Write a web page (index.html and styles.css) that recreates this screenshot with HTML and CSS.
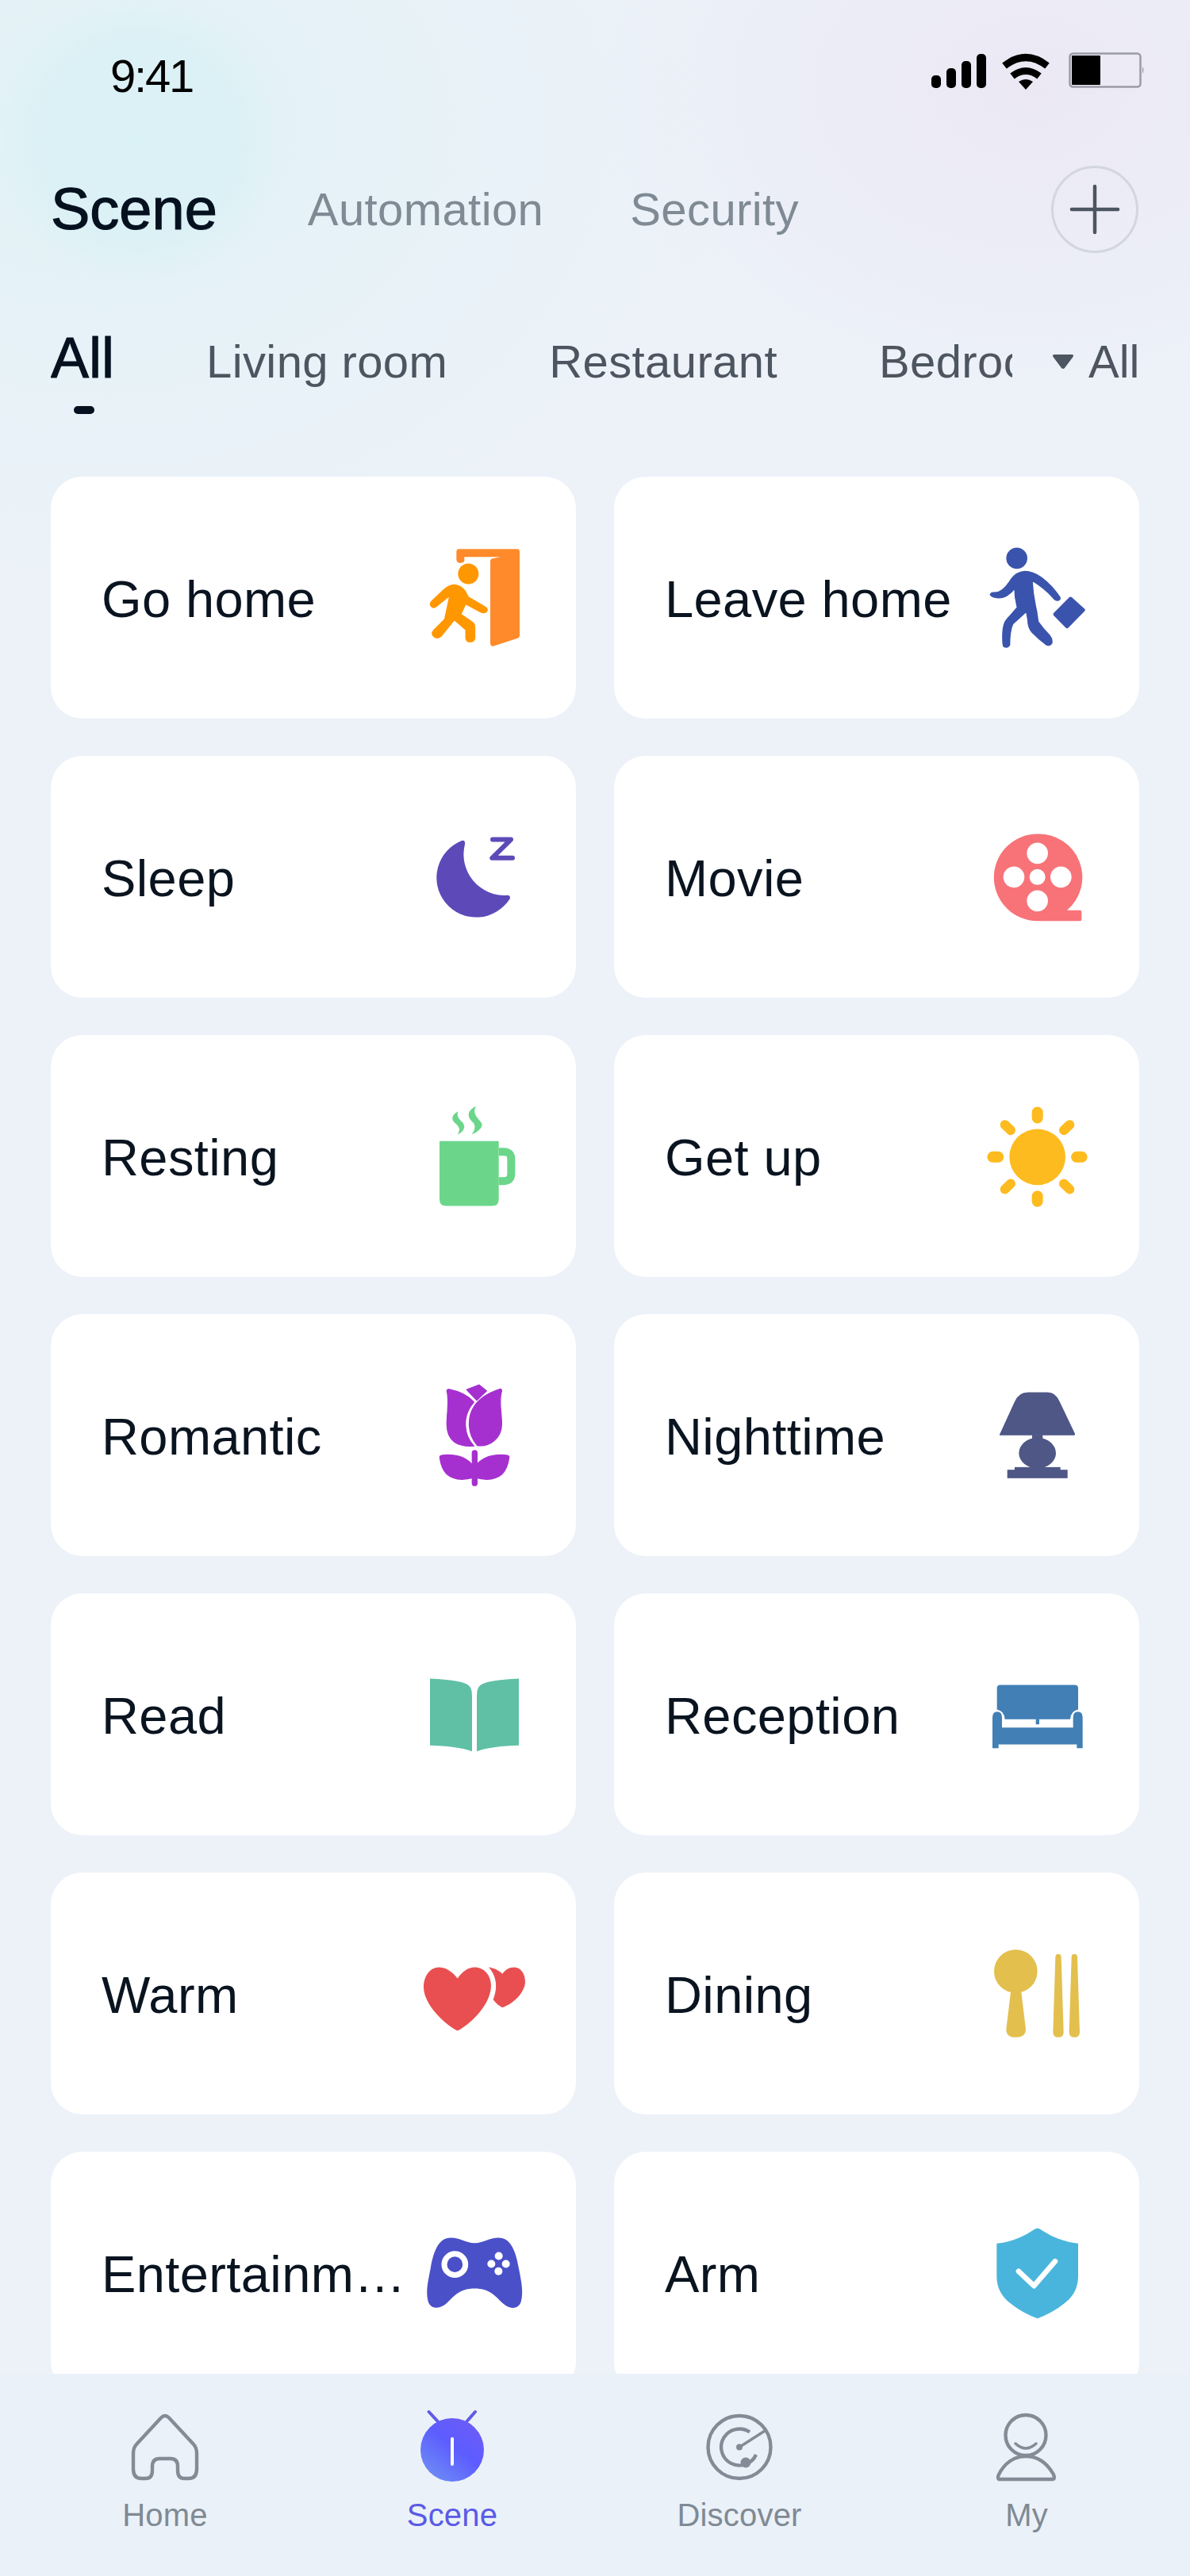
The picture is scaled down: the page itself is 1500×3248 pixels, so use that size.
FILE: index.html
```html
<!DOCTYPE html>
<html lang="en">
<head>
<meta charset="utf-8">
<title>Scene</title>
<link rel="stylesheet" href="styles.css">
</head>
<body>
<div class="app">
  <header class="status">
    <span class="time">9:41</span>
    <div class="status-icons">
      <svg class="ic-signal" width="70" height="44" viewBox="0 0 70 44"><rect x="1" y="27" width="12" height="16" rx="5"/><rect x="20" y="18" width="12" height="25" rx="5"/><rect x="39" y="9" width="12" height="34" rx="5"/><rect x="58" y="0" width="12" height="43" rx="5"/></svg>
      <svg class="ic-wifi" width="62" height="46" viewBox="0 0 62 46"><path class="wifi-arc" d="M4 16Q31-5 58 16"/><path class="wifi-arc" d="M14 29Q31 16 48 29"/><path d="M22 36Q31 30 40 36L31 46Z"/></svg>
      <svg width="96" height="46" viewBox="0 0 96 46"><rect class="batt-shell" x="1.500" y="1.500" width="89" height="42" rx="4"/><rect x="4" y="4" width="36" height="37" rx="1"/><path class="batt-nub" d="M93 18q3 4 0 9z"/></svg>
    </div>
  </header>

  <nav class="main-tabs">
    <span class="main-tab is-active">Scene</span>
    <span class="main-tab">Automation</span>
    <span class="main-tab">Security</span>
    <button class="add" type="button" aria-label="Add">
      <svg width="66" height="66" viewBox="0 0 66 66"><path d="M33 3V63M3 33H63"/></svg>
    </button>
  </nav>

  <div class="rooms">
    <div class="room-list">
      <span class="room is-active">All<i class="room-mark"></i></span>
      <span class="room">Living room</span>
      <span class="room">Restaurant</span>
      <span class="room">Bedroom</span>
    </div>
    <div class="room-filter">
      <svg width="28" height="20" viewBox="0 0 28 20"><path d="M3 1H25Q28 1 26.500 4L16 18Q14 20 12 18L1.500 4Q0 1 3 1Z"/></svg>
      <span>All</span>
    </div>
  </div>

  <main class="grid">
    <article class="card"><span class="card-label">Go home</span>
      <svg class="card-icon" viewBox="78 70.500 480 480"><path fill="#ff8a2b" d="M226 135q0-10 10-10H455q10 0 10 10V450q0 10-8 13L368 492q-14 4-14-12V170q0-5 5-8L392 155H256V168q0 10-14 10q-16 0-16-14Z"/><circle fill="#ff9800" cx="271" cy="219" r="39"/><path fill="#ff9800" stroke="#ff9800" stroke-width="7" stroke-linejoin="round" d="M218 262Q243 264 259 287L270 308L333 345Q346 353 338 362Q330 368 318 362L260 331L241 373L287 404Q294 410 294 420V462Q292 475 278 475Q265 475 263 462V430L218 391L166 455Q152 465 141 454Q131 445 141 434L183 392L203 298L148 342Q138 349 131 340Q125 331 135 322L182 278Q197 264 218 262Z"/></svg></article>
    <article class="card"><span class="card-label">Leave home</span>
      <svg class="card-icon" viewBox="48 70.500 480 480"><g fill="#3a54ad"><circle cx="185" cy="160" r="40"/><path stroke="#3a54ad" stroke-width="6" stroke-linejoin="round" d="M215 211Q245 211 278 234Q318 264 347 308Q350 319 338 319Q330 319 322 308Q290 272 242 243Q245 300 259 360L265 401Q283 427 308 452Q319 465 317 480Q310 492 298 487Q270 467 242 438Q228 420 228 395L222 360L169 408Q157 435 157 488Q150 499 137 494Q131 490 133 440Q135 407 148 392L188 346Q178 310 178 272Q150 309 115 309Q92 307 86 298Q88 290 100 291Q132 293 163 242Q183 213 215 211Z"/><path stroke="#3a54ad" stroke-width="14" stroke-linejoin="round" d="M388 313L436 356L375 418L330 372Z"/></g></svg></article>

    <article class="card"><span class="card-label">Sleep</span>
      <svg class="card-icon" viewBox="78 -43.500 480 480"><path fill="#5d4ab8" d="M248 58A150 150 0 1 0 428 278q4-12-10-13A155 155 0 0 1 258 72q2-16-10-14Z"/><path fill="none" stroke="#5d4ab8" stroke-width="18" stroke-linecap="round" stroke-linejoin="round" d="M363 54H432L361 124H438"/></svg></article>
    <article class="card"><span class="card-label">Movie</span>
      <svg class="card-icon" viewBox="48 -43.500 480 480"><path fill="#f77378" d="M263 33a164 164 0 0 1 112 289h49q6 0 6 6v28q0 6-6 6H263a164 164 0 0 1 0-329Z"/><g fill="#fff"><circle cx="263" cy="106" r="40"/><circle cx="174" cy="196" r="40"/><circle cx="352" cy="196" r="40"/><circle cx="263" cy="286" r="40"/><circle cx="263" cy="196" r="30"/></g></svg></article>

    <article class="card"><span class="card-label">Resting</span>
      <svg class="card-icon" viewBox="78 1012.500 480 480"><g fill="#6bd68a"><path d="M162 1195H386V1415q0 25-25 25H187q-25 0-25-25Z"/><path d="M300 1063C265 1080 265 1105 290 1125C300 1140 295 1155 283 1170C310 1160 330 1140 320 1125C305 1105 285 1090 300 1063Z"/><path d="M233 1082C205 1095 205 1115 225 1130C240 1145 240 1155 230 1170C255 1160 262 1140 250 1125C235 1110 225 1100 233 1082Z"/></g><path fill="none" stroke="#6bd68a" stroke-width="30" d="M386 1235H405q28 0 28 28v55q0 28-28 28H386"/></svg></article>
    <article class="card"><span class="card-label">Get up</span>
      <svg class="card-icon" viewBox="48 1012.500 480 480"><circle fill="#fdbb1f" cx="263" cy="1255" r="106"/><path fill="none" stroke="#fdbb1f" stroke-width="42" stroke-linecap="round" d="M263 1086V1107M263 1403V1423M94 1255H115M411 1255H431"/><path fill="none" stroke="#fdbb1f" stroke-width="36" stroke-linecap="round" d="M140 1133L162 1154M385 1133L363 1154M140 1377L162 1356M385 1377L363 1356"/></svg></article>

    <article class="card"><span class="card-label">Romantic</span>
      <svg class="card-icon" viewBox="78 28.500 480 480"><g fill="#a630cf" stroke="#a630cf" stroke-width="4" stroke-linejoin="round"><path d="M265 95L312 77L340 100L303 135Z"/><path d="M190 100q0-8 10-6q60 12 92 48q-35 40-32 90q2 45 32 76C230 312 190 290 190 225C190 180 200 140 190 100Z"/><path d="M397 100q0-10-10-6q-75 25-100 75q-15 30-12 65q2 40 30 72C350 312 397 280 397 225C397 180 385 140 397 100Z"/><path d="M163 350q0-8 30-8Q260 342 290 385V428Q225 445 190 415Q168 392 163 350Z"/><path d="M425 350q0-8-30-8Q328 342 298 385V428Q363 445 398 415Q420 392 425 350Z"/><rect x="286" y="325" width="18" height="133" rx="9"/></g></svg></article>
    <article class="card"><span class="card-label">Nighttime</span>
      <svg class="card-icon" viewBox="48 28.500 480 480"><g fill="#4e5785"><path d="M120 265L177 140q15-35 50-35h75q30 0 45 35L405 262q2 5-4 6H124q-6 0-4-3Z"/><rect x="243" y="266" width="40" height="26"/><ellipse cx="263" cy="335" rx="70" ry="58"/><rect x="177" y="388" width="173" height="14"/><rect x="149" y="398" width="228" height="32"/></g></svg></article>

    <article class="card"><span class="card-label">Read</span>
      <svg class="card-icon" viewBox="78 1084.500 480 480"><g fill="#5fc0a6"><path d="M126 1188q120 5 145 25q14 10 14 40V1463q-60-20-159-22Z"/><path d="M462 1188q-120 5-145 25q-14 10-14 40V1463q60-20 159-22Z"/></g></svg></article>
    <article class="card"><span class="card-label">Reception</span>
      <svg class="card-icon" viewBox="48 1084.500 480 480"><g fill="#417fb5"><path d="M110 1225q0-13 13-13H404q13 0 13 13V1305q-28 5-30 37H140q-2-32-30-37Z"/><rect x="257" y="1340" width="13" height="21"/><path d="M93 1335q0-22 18-22q18 0 18 22V1373H398V1335q0-22 18-22q18 0 18 22V1451H412V1437H116V1451H93Z"/></g></svg></article>

    <article class="card"><span class="card-label">Warm</span>
      <svg class="card-icon" viewBox="78 10.500 480 480"><g fill="#e94f50"><path d="M230 192C205 160 180 150 160 150C125 150 102 185 102 225C102 290 180 365 230 390C280 365 357 290 357 220C357 180 330 150 295 150C270 150 250 165 230 192Z"/><path d="M348 150C365 152 385 160 400 175C410 160 425 150 445 150C470 150 486 175 486 205C486 245 440 290 400 302C385 295 375 285 365 272C378 240 385 190 348 150Z"/></g></svg></article>
    <article class="card"><span class="card-label">Dining</span>
      <svg class="card-icon" viewBox="48 10.500 480 480"><g fill="#e3bf4e"><circle cx="181" cy="165" r="82"/><path d="M163 235L145 385q0 30 36 30q38 0 38-30L201 235Z"/><path d="M331 112q0-12 11-12q11 0 11 12L362 395q0 20-20 20q-20 0-20-20Z"/><path d="M392 112q0-12 11-12q11 0 11 12L423 395q0 20-20 20q-20 0-20-20Z"/></g></svg></article>

    <article class="card"><span class="card-label">Entertainment</span>
      <svg class="card-icon" viewBox="78 1066.500 480 480"><path fill="#4a50c8" d="M205 1173C240 1173 260 1193 295 1193C330 1193 350 1173 385 1173C430 1173 450 1220 462 1290C472 1340 480 1380 470 1415C460 1445 425 1445 400 1420C370 1390 350 1365 295 1365C240 1365 220 1390 190 1420C165 1445 125 1445 118 1410C110 1375 118 1340 128 1290C140 1220 160 1173 205 1173Z"/><circle fill="none" stroke="#fff" stroke-width="21" cx="220" cy="1274" r="40"/><g fill="#fff"><circle cx="386" cy="1242" r="15"/><circle cx="358" cy="1272" r="15"/><circle cx="413" cy="1272" r="15"/><circle cx="385" cy="1300" r="15"/></g></svg></article>
    <article class="card"><span class="card-label">Arm</span>
      <svg class="card-icon" viewBox="48 1066.500 480 480"><path fill="#4ab5dc" d="M263 1137q5 0 20 10q60 40 134 48V1320q0 60-50 100q-50 40-104 58q-54-18-104-58q-50-40-50-100V1195q74-8 134-48q15-10 20-10Z"/><path fill="none" stroke="#fff" stroke-width="20" stroke-linecap="round" stroke-linejoin="round" d="M192 1300L250 1355L330 1262"/></svg></article>
  </main>

  <footer class="tabbar">
    <div class="tab">
      <svg class="tab-icon" viewBox="0 0 100 92"><path d="M45 10.500q5-5 10 0L86 44q4 4 4 12V75q0 12-10 12H74q-8 0-8-10V72q0-10-9-10H43q-9 0-9 10V77q0 10-8 10H20q-10 0-10-12V56q0-8 4-12Z"/></svg>
      <span class="tab-label">Home</span>
    </div>
    <div class="tab is-active">
      <svg class="tab-icon" viewBox="0 0 100 92"><defs><linearGradient id="sceneGrad" x1="0.100" y1="1" x2="0.900" y2="0"><stop offset="0" stop-color="#6f92f4"/><stop offset="0.550" stop-color="#5d5cff"/><stop offset="1" stop-color="#6e5cf6"/></linearGradient></defs><path class="antenna" d="M20.600 3L31.700 15M79 3L68.500 15"/><circle fill="url(#sceneGrad)" stroke="none" cx="50" cy="51" r="40"/><path class="scene-bar" d="M50 37V69"/></svg>
      <span class="tab-label">Scene</span>
    </div>
    <div class="tab">
      <svg class="tab-icon" viewBox="0 0 100 92"><circle cx="50" cy="47.500" r="39.500"/><path d="M63 28.500A23 23 0 1 0 71 57"/><path class="thin" d="M50 47.500L82 27"/><circle class="dot" cx="50" cy="47.500" r="4"/><circle class="dot" cx="58" cy="67" r="6.500"/></svg>
      <span class="tab-label">Discover</span>
    </div>
    <div class="tab">
      <svg class="tab-icon" viewBox="0 0 100 92"><circle cx="49" cy="32.500" r="25.500"/><path d="M15 88q-2-2 0-6C22 68 34 59 49 59C64 59 76 68 84 82q2 6-1 6Z"/><path class="thin" d="M36 43q13 12 26 0"/></svg>
      <span class="tab-label">My</span>
    </div>
  </footer>
</div>
</body>
</html>
```
FILE: styles.css
```css
* { box-sizing: border-box; }
html, body { margin: 0; padding: 0; }
body { font-family: "Liberation Sans", Arial, sans-serif; color: #0a1420; }

.app {
  width: 1500px;
  height: 3248px;
  display: flex;
  flex-direction: column;
  overflow: hidden;
  background:
    radial-gradient(circle 180px at 175px 175px, #daf1f5 0%, #dcf1f5 72%, rgba(220,241,245,0) 100%),
    radial-gradient(ellipse 820px 620px at 120px 160px, #e1f2f6 0%, rgba(225,242,246,0) 100%),
    radial-gradient(ellipse 560px 420px at 1300px 110px, #ebe8f4 0%, rgba(235,232,244,0) 100%),
    #edf2f9;
}

/* status bar */
.status {
  height: 208px;
  flex: none;
  display: flex;
  justify-content: space-between;
  align-items: flex-start;
  padding: 64px 57px 0 139px;
}
.time {
  font-size: 58px;
  line-height: 64px;
  letter-spacing: -2.200px;
  color: #000;
}
.status-icons { display: flex; gap: 19px; align-items: flex-start; margin-top: 2px; }
.status-icons svg { display: block; }
.ic-signal { margin-top: 2px; }
.ic-wifi { margin-top: 1px; margin-right: 4px; }
.wifi-arc { fill: none; stroke: #000; stroke-width: 9; stroke-linecap: butt; }
.batt-shell { fill: none; stroke: #9a9ca6; stroke-width: 2.500; }
.batt-nub { fill: #9a9ca6; }

/* main tabs */
.main-tabs {
  height: 111px;
  flex: none;
  display: flex;
  align-items: center;
  gap: 109px;
  padding: 0 65px 0 64px;
}
.main-tab { font-size: 58px; letter-spacing: 0.400px; color: #7f8a94; }
.main-tab.is-active {
  font-size: 74px;
  letter-spacing: 0;
  margin-right: 5px;
  color: #05111f;
  -webkit-text-stroke: 1.200px #05111f;
}
.add {
  margin-left: auto;
  width: 110px;
  height: 110px;
  padding: 0;
  border: 3px solid #d3d6de;
  border-radius: 50%;
  background: transparent;
  display: flex;
  align-items: center;
  justify-content: center;
}
.add svg { display: block; width: 64px; height: 64px; }
.add path { fill: none; stroke: #4c5560; stroke-width: 4.600; stroke-linecap: round; }

/* room filter */
.rooms {
  flex: none;
  height: 190px;
  margin-top: 92px;
  display: flex;
  align-items: flex-start;
  padding-left: 64px;
}
.room-list {
  width: 1212px;
  flex: none;
  display: flex;
  align-items: baseline;
  gap: 128px;
  overflow: hidden;
  height: 120px;
}
.room { font-size: 58px; letter-spacing: 0.400px; line-height: 80px; color: #4c5560; white-space: nowrap; }
.room.is-active {
  font-size: 72px;
  letter-spacing: 0;
  color: #05111f;
  -webkit-text-stroke: 1px #05111f;
  display: inline-flex;
  flex-direction: column;
  align-items: center;
  margin-right: -12px;
}
.room-mark {
  display: block;
  width: 26px;
  height: 10px;
  margin-top: 21px;
  margin-left: 4px;
  border-radius: 5px;
  background: #05111f;
}
.room-filter {
  display: flex;
  align-items: center;
  gap: 18px;
  margin-left: 50px;
  font-size: 58px;
  line-height: 80px;
  color: #4c5560;
  margin-top: 5px;
}
.room-filter svg { display: block; fill: #4c5560; margin-top: -1px; }

/* cards */
.grid {
  flex: 1;
  min-height: 0;
  overflow: hidden;
  display: grid;
  grid-template-columns: 662px 662px;
  grid-auto-rows: 305px;
  column-gap: 48px;
  row-gap: 47px;
  padding: 0 64px;
}
.card {
  background: #fff;
  border-radius: 40px;
  display: flex;
  align-items: center;
  padding: 0 40px 0 64px;
}
.card-label {
  flex: 1;
  min-width: 0;
  padding-top: 4px;
  font-size: 65px;
  letter-spacing: 0.400px;
  color: #0a1420;
  white-space: nowrap;
  overflow: hidden;
  text-overflow: ellipsis;
}
.card-icon { flex: none; width: 160px; height: 160px; display: block; }

/* tab bar */
.tabbar {
  flex: none;
  height: 255px;
  background: #ebf1f8;
  display: grid;
  grid-template-columns: repeat(4, 362px);
  padding: 45px 0 0 27px;
}
.tab { display: flex; flex-direction: column; align-items: center; }
.tab-icon {
  width: 100px;
  height: 92px;
  display: block;
  fill: none;
  stroke: #838c96;
  stroke-width: 4.400;
}
.tab-icon .thin { stroke-width: 3.500; stroke-linecap: round; }
.tab-icon .dot { fill: #838c96; stroke: none; }
.tab-icon .antenna { stroke: #5f5ae8; stroke-width: 4; stroke-linecap: round; }
.tab-icon .scene-bar { stroke: #fff; stroke-width: 4; stroke-linecap: round; }
.tab-label { font-size: 40px; letter-spacing: 0.200px; line-height: 46px; margin-top: 18px; color: #7f8a94; }
.tab.is-active .tab-label { color: #5a5ae6; }
```
